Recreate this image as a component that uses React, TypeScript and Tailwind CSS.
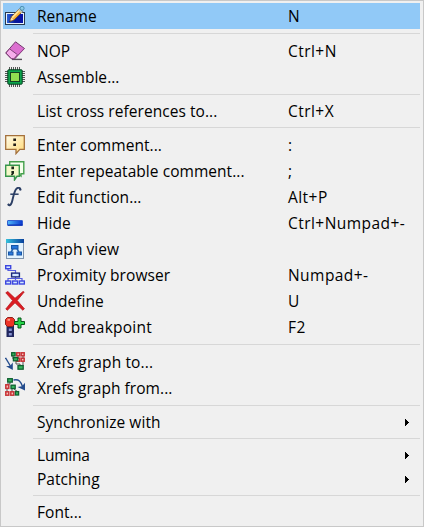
import type { ReactNode } from "react";

function Icon({ children }: { children: ReactNode }) {
  return (
    <svg width="20" height="20" viewBox="0 0 20 20" fill="none" className="block">
      {children}
    </svg>
  );
}

function RenameIcon() {
  return (
    <Icon>
      <defs>
        <linearGradient id="field" x1="0" y1="0" x2="1" y2="0">
          <stop offset="0" stopColor="#2b62d8" />
          <stop offset="0.5" stopColor="#0a1a98" />
          <stop offset="1" stopColor="#0712a8" />
        </linearGradient>
      </defs>
      <rect x="0.5" y="6.5" width="19" height="12" fill="#e8f2fc" stroke="#26384f" />
      <rect x="2" y="8" width="16" height="9" fill="url(#field)" />
      <path d="M4.8 15.5L6.3 11L14.5 2.8L17.5 5.5L9.2 13.8Z" fill="#f6b23c" stroke="#7a4b1c" strokeWidth="0.8" />
      <path d="M7.2 11.6L15 3.8" stroke="#ffe8a0" strokeWidth="1.6" />
      <path d="M5 15.5L6.2 11.8L8.6 13.6Z" fill="#f7dfae" />
      <path d="M4.6 15.8L6 14.4" stroke="#241c18" />
      <path d="M13.8 3.6L17.2 6.5" stroke="#b8c8cc" strokeWidth="1.6" />
      <circle cx="17.1" cy="2.3" r="2" fill="#8ccbe6" stroke="#4d90b2" />
    </Icon>
  );
}

function EraserIcon() {
  return (
    <Icon>
      <path d="M7 18.4H17" stroke="#58505a" strokeWidth="1.4" />
      <path d="M0.7 12L10.5 0.8L19.5 7.5L9.5 18L6.3 17.8Z" fill="#dc70d0" stroke="#713c6d" />
      <path d="M1 12L4.5 7.8L12.5 13.7L8.9 17.8L6.3 17.5Z" fill="#f6aceb" stroke="#81447b" />
      <path d="M9.8 17.4L19 7.8" stroke="#94438b" />
    </Icon>
  );
}

function ChipIcon() {
  return (
    <Icon>
      <path
        d="M4.5 0V20M6.5 0V20M8.5 0V20M10.5 0V20M12.5 0V20M14.5 0V20M0 4.5H20M0 6.5H20M0 8.5H20M0 10.5H20M0 12.5H20M0 14.5H20"
        stroke="#444"
        strokeWidth="0.9"
      />
      <rect x="2.8" y="2.8" width="14.4" height="14.4" rx="0.7" fill="#0ba54c" stroke="#073f20" />
      <rect x="5.5" y="5.5" width="9" height="9" fill="#91dc50" stroke="#153f21" />
    </Icon>
  );
}

function CommentIcon() {
  return (
    <Icon>
      <defs>
        <linearGradient id="note" x1="0" y1="0" x2="1" y2="1">
          <stop offset="0" stopColor="#fffce9" />
          <stop offset="1" stopColor="#ffd875" />
        </linearGradient>
      </defs>
      <path d="M0.7 0.7H19.3V14.3H14.8L11 18.6V14.3H0.7Z" fill="url(#note)" stroke="#a4703b" strokeWidth="1.3" />
      <path d="M8.3 3.5H11V6H8.3ZM8.3 8.5H11V11H8.3Z" fill="#211c18" />
    </Icon>
  );
}

function RepeatableCommentIcon() {
  return (
    <Icon>
      <path d="M4.7 0.7H18.8V12.8H16V15L13 12.8H4.7Z" fill="#f5ffec" stroke="#45a04c" strokeWidth="1.4" />
      <path d="M0.7 4.2H14.3V15.3H12L9.5 19V15.3H0.7Z" fill="#f4f8c9" stroke="#37964c" strokeWidth="1.4" />
      <path d="M6.4 5.6H9V8.2H6.4ZM6.4 10H9V12.5L7.5 14.3H5.8L6.8 12.3H6.4Z" fill="#182618" />
    </Icon>
  );
}

function FunctionIcon() {
  return (
    <Icon>
      <path
        d="M15.6 2.6C15.2 0.4 12.6 0.2 11.1 2.2C9.4 4.2 8.5 9.1 7.4 13.2C6.7 16.6 5.3 19.4 3.4 17.8"
        stroke="#2b3e64"
        strokeWidth="1.9"
        strokeLinecap="round"
      />
      <path d="M5.3 7.2H13.6" stroke="#2b3e64" strokeWidth="1.5" />
      <circle cx="15" cy="2.6" r="1" fill="#2b3e64" />
      <circle cx="3.6" cy="17.6" r="1" fill="#2b3e64" />
    </Icon>
  );
}

function HideIcon() {
  return (
    <Icon>
      <defs>
        <linearGradient id="bar" x1="0" y1="0" x2="1" y2="0">
          <stop offset="0" stopColor="#50bafa" />
          <stop offset="1" stopColor="#0935ce" />
        </linearGradient>
      </defs>
      <rect x="2.5" y="7.5" width="15" height="5" rx="0.5" fill="url(#bar)" stroke="#345fd0" />
      <path d="M3 12H17.5" stroke="#0826a8" />
    </Icon>
  );
}

function GraphIcon() {
  return (
    <Icon>
      <defs>
        <linearGradient id="titlebar" x1="0" y1="0" x2="1" y2="0">
          <stop offset="0" stopColor="#35c2dc" />
          <stop offset="1" stopColor="#083f9c" />
        </linearGradient>
      </defs>
      <rect x="1.5" y="0.5" width="17" height="19" fill="#e3f3ff" stroke="#8094ac" />
      <rect x="1" y="0" width="18" height="4" fill="url(#titlebar)" />
      <path d="M8 10L6 13M12 10L14 13" stroke="#286ab4" strokeWidth="1.5" />
      <rect x="6.5" y="6.5" width="6.5" height="3.5" fill="#2475da" stroke="#1855a3" />
      <rect x="3.5" y="13" width="4.5" height="3" fill="#2b7ade" stroke="#1855a3" />
      <rect x="12" y="13" width="4.5" height="3" fill="#2b7ade" stroke="#1855a3" />
    </Icon>
  );
}

function ProximityIcon() {
  return (
    <Icon>
      <path d="M3 3V5.5H10.5V15M10.5 11V13.5H3V16M10.5 13.5H17V16" stroke="#535de0" strokeWidth="1.2" />
      <g fill="#d3e8ff" stroke="#3d46df" strokeWidth="1.4">
        <rect x="0.7" y="0.7" width="5" height="3" />
        <rect x="6.6" y="8.1" width="7.8" height="3.8" stroke="#1b287c" />
        <rect x="0.7" y="16" width="5" height="3" />
        <rect x="7.6" y="16" width="5" height="3" />
        <rect x="14.4" y="16" width="5" height="3" />
      </g>
    </Icon>
  );
}

function DeleteIcon() {
  return (
    <Icon>
      <path
        d="M0.8 1.8L2.8 0.5L10 7.3L18 0.5L19.2 1L12.2 9.5L19.4 17.8L17.8 19.2L10 11.8L2.4 19.2L0.8 18L7.6 9.5Z"
        fill="#dc1c22"
        stroke="#b91920"
        strokeWidth="0.8"
      />
    </Icon>
  );
}

function BreakpointIcon() {
  return (
    <Icon>
      <rect x="1.5" y="8" width="7.5" height="12" fill="#21275f" />
      <rect x="3.8" y="11.5" width="3" height="2.5" fill="#8692d0" />
      <rect x="3.8" y="16" width="3" height="2.5" fill="#8692d0" />
      <path d="M0.5 2.5L2.5 0.5H7.5L9.5 2.5V7.5L7.5 9.5H2.5L0.5 7.5Z" fill="#ef3427" stroke="#8e1e1b" />
      <path d="M2.5 2.8H5" stroke="#ff9b87" strokeWidth="2" />
      <path d="M13 1H16V4.5H19.5V7.5H16V11H13V7.5H9.7V4.5H13Z" fill="#25d449" stroke="#07561b" />
    </Icon>
  );
}

function XrefsToIcon() {
  return (
    <Icon>
      <path d="M8 3V7M11 8V12H15V14M13 3V6M18 4V14" stroke="#555" />
      <g fill="#f4c4bc" stroke="#c83438" strokeWidth="1.5">
        <rect x="11.7" y="0.8" width="3" height="3" />
        <rect x="16.2" y="0.8" width="3" height="3" />
        <rect x="16.2" y="6.2" width="3" height="3" />
        <rect x="11.7" y="6.2" width="3" height="3" />
      </g>
      <g fill="#35b85c" stroke="#0f6030" strokeWidth="1.3">
        <rect x="6.7" y="0.7" width="3.4" height="3.2" />
        <rect x="8.4" y="5.6" width="4.4" height="3.2" />
        <rect x="13" y="13.6" width="5.2" height="3.6" />
      </g>
      <path d="M0.5 5.8L6 15" stroke="#244c8d" strokeWidth="1.4" />
      <path d="M7.8 10.5V18L1 14.2L5.3 13.8Z" fill="#244c8d" />
    </Icon>
  );
}

function XrefsFromIcon() {
  return (
    <Icon>
      <path d="M5 3V6H2V15M7 7V15M9 11L13 14" stroke="#555" />
      <g fill="#f4c4bc" stroke="#c83438" strokeWidth="1.5">
        <rect x="0.8" y="6.8" width="3" height="3.6" />
        <rect x="0.8" y="13.8" width="3" height="3.4" />
        <rect x="5.8" y="13.8" width="3" height="3.4" />
      </g>
      <g fill="#35b85c" stroke="#0f6030" strokeWidth="1.3">
        <rect x="2.7" y="0.7" width="4.6" height="3.4" />
        <rect x="6" y="7.2" width="4.2" height="3.4" />
        <rect x="10.4" y="13.6" width="3.2" height="3.4" />
      </g>
      <path d="M8.5 2C14 0.8 15.8 3.5 17.5 8.5" stroke="#244c8d" strokeWidth="1.4" />
      <path d="M20 4.8V12.5L12.5 9L17 8.2Z" fill="#244c8d" />
    </Icon>
  );
}

type Item = {
  label: string;
  keys?: string;
  icon?: ReactNode;
  submenu?: boolean;
  selected?: boolean;
  tracking?: string;
};

const groups: Item[][] = [
  [{ label: "Rename", keys: "N", icon: <RenameIcon />, selected: true }],
  [
    { label: "NOP", keys: "Ctrl+N", icon: <EraserIcon /> },
    { label: "Assemble...", icon: <ChipIcon /> },
  ],
  [{ label: "List cross references to...", keys: "Ctrl+X" }],
  [
    { label: "Enter comment...", keys: ":", icon: <CommentIcon /> },
    { label: "Enter repeatable comment...", keys: ";", icon: <RepeatableCommentIcon /> },
    { label: "Edit function...", keys: "Alt+P", icon: <FunctionIcon /> },
    { label: "Hide", keys: "Ctrl+Numpad+-", icon: <HideIcon /> },
    { label: "Graph view", icon: <GraphIcon /> },
    { label: "Proximity browser", keys: "Numpad+-", icon: <ProximityIcon /> },
    { label: "Undefine", keys: "U", icon: <DeleteIcon /> },
    { label: "Add breakpoint", keys: "F2", icon: <BreakpointIcon />, tracking: "tracking-[0.22px]" },
  ],
  [
    { label: "Xrefs graph to...", icon: <XrefsToIcon />, tracking: "tracking-[0.12px]" },
    { label: "Xrefs graph from...", icon: <XrefsFromIcon /> },
  ],
  [{ label: "Synchronize with", submenu: true }],
  [
    { label: "Lumina", submenu: true, tracking: "tracking-[-0.2px]" },
    { label: "Patching", submenu: true },
  ],
  [{ label: "Font..." }],
];

function MenuItem({ item }: { item: Item }) {
  return (
    <div
      role="menuitem"
      className={`grid grid-cols-[34px_251px_1fr_16px] items-center ${item.icon ? "h-[26px]" : "h-6"} ${
        item.selected ? "bg-[#91c9f7]" : ""
      }`}
    >
      <span className="pl-0.5">{item.icon}</span>
      <span className={`whitespace-nowrap ${item.tracking ?? "tracking-[0.05px]"}`}>{item.label}</span>
      <span className="whitespace-nowrap tracking-[0.45px]">{item.keys}</span>
      {item.submenu && (
        <svg width="4" height="7" viewBox="0 0 4 7" className="ml-px block" shapeRendering="crispEdges">
          <path d="M0 0H1V1H2V2H3V3H4V4H3V5H2V6H1V7H0Z" fill="#000" />
        </svg>
      )}
    </div>
  );
}

export default function App() {
  return (
    <div
      role="menu"
      className="h-[527px] w-[424px] border border-[#c8c8c8] bg-[#f0f0f0] py-0.5 pr-[3px] pl-0.5 font-['Open_Sans',sans-serif] text-[15.5px] leading-5 text-black"
    >
      {groups.map((group, index) => (
        <div key={index}>
          {index > 0 && (
            <div className="h-[9px] pt-1 pl-[30px]">
              <div className="h-px bg-[#d7d7d7]" />
            </div>
          )}
          {group.map((item) => (
            <MenuItem key={item.label} item={item} />
          ))}
        </div>
      ))}
    </div>
  );
}
